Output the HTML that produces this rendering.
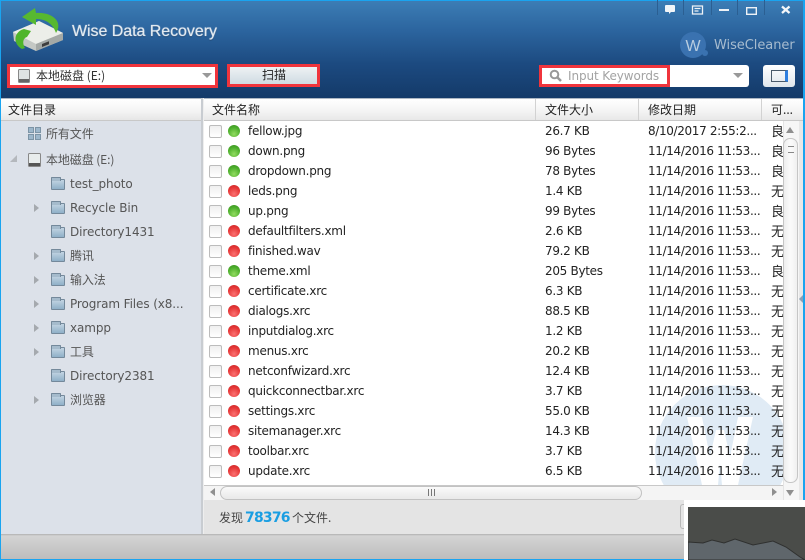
<!DOCTYPE html>
<html><head><meta charset="utf-8">
<style>
*{box-sizing:border-box;margin:0;padding:0}
html,body{width:805px;height:560px;overflow:hidden;background:#fff}
body{position:relative;font-family:"DejaVu Sans","Noto Sans CJK SC",sans-serif;font-size:12px;color:#222}
.a{position:absolute;white-space:nowrap}
#top{left:0;top:0;width:805px;height:98px;background:linear-gradient(#3c7db5 0,#2c659f 30%,#1c4a80 65%,#143a69 100%);border-top:1px solid #19a4f0}
#side{left:1px;top:121px;width:200px;height:413px;background:#dce1e9}
.hd{top:98px;height:23px;background:linear-gradient(#fff,#f3f3f3 60%,#e8e8e8);border-bottom:1px solid #c8c8c8;border-top:1px solid #aeb8c4}
.c{font-family:"Noto Sans CJK SC","DejaVu Sans",sans-serif}
.r{left:248px;width:530px;height:20px;line-height:20px}
.r span{position:absolute;top:0;white-space:nowrap}
.r .n{left:0;letter-spacing:-.25px}
.r .s{left:297px;letter-spacing:-.3px}
.r .d{left:400px;letter-spacing:-.35px}
.r .k{left:523px;font-family:"Noto Sans CJK SC",sans-serif;font-size:13px}
.cb{left:209px;width:13px;height:13px;border:1px solid #bcbcbc;border-radius:2px;background:linear-gradient(#efefef,#fff)}
.g,.x{left:228px;width:12px;height:12px;margin-top:1px;border-radius:50%}
.g{background:radial-gradient(circle at 50% 75%,#92dc60,#4cae2c 60%,#3a8c22)}
.x{background:radial-gradient(circle at 50% 75%,#fb7070,#e53636 60%,#c62828)}
.t{color:#555;height:18px;line-height:18px;font-size:12px;letter-spacing:-.1px}
.f{width:14px;height:11px;margin-top:1px;background:linear-gradient(#c2d4e2,#8fb0c8);border:1px solid #74899b;border-radius:1px}
.f::before{content:"";position:absolute;left:-1px;top:-3px;width:8px;height:3px;background:#a5bbcc;border:1px solid #74899b;border-bottom:0;border-radius:1px 1px 0 0}
.ar{width:0;height:0;border-left:5px solid #a5a9ae;border-top:4px solid transparent;border-bottom:4px solid transparent}
</style></head><body>
<div class="a" id="top"></div>

<svg class="a" style="left:10px;top:8px" width="58" height="46" viewBox="0 0 58 46">
<path d="M3 24 L29 13 L53 25 L53 32 L26 43 L4 33Z" fill="#c4c8c4"/>
<path d="M3 24 L29 13 L53 25 L26 36Z" fill="#eceee9"/>
<path d="M26 36 L53 25 L53 32 L26 43Z" fill="#a4a9a6"/>
<path d="M32 36l7-2.800v3l-7 2.800z" fill="#3d3d3d"/>
<path d="M12 41C3 36 3 24 14 21L21 23L17 29C13 30 12 35 15 40Z" fill="#4fb52b"/>
<path d="M25 0 L12 9 L26 17 L26 11 C36 11 43 16 46 25 C53 15 44 4 26 5Z" fill="#57b830"/>
</svg>
<div class="a" style="left:72px;top:23px;font:16px 'Liberation Sans',sans-serif;color:#e2eaf1;text-shadow:0 0 1px #e2eaf1,0 1px 1px #1a3e68;letter-spacing:-.05px">Wise Data Recovery</div>

<div class="a" style="left:7px;top:64px;width:211px;height:24px;background:#fff;border:3px solid #f0343c"></div>
<svg class="a" style="left:18px;top:69px" width="12" height="14"><rect x=".5" y=".5" width="11" height="13" rx="1" fill="#dfe3e3" stroke="#888"/><rect x="1" y="10" width="10" height="3" fill="#666"/></svg>
<div class="a c" style="left:36px;top:67px;line-height:18px;font-size:12px;color:#333">本地磁盘 (E:)</div>
<div class="a" style="left:202px;top:73px;border-top:5px solid #999;border-left:5px solid transparent;border-right:5px solid transparent"></div>

<div class="a" style="left:227px;top:64px;width:93px;height:23px;background:linear-gradient(#eef2f4,#cfdbe2);border:3px solid #f0343c"></div>
<div class="a c" style="left:262px;top:66px;line-height:18px;font-size:12px;color:#222">扫描</div>

<div class="a" style="left:540px;top:65px;width:209px;height:22px;background:#fff;border-radius:3px"></div>
<div class="a" style="left:539px;top:65px;width:131px;height:22px;border:3px solid #f0343c"></div>
<svg class="a" style="left:549px;top:69px" width="14" height="14"><circle cx="5.500" cy="5.500" r="3.800" fill="none" stroke="#999" stroke-width="2"/><path d="M8 8l4 4" stroke="#999" stroke-width="2.500"/></svg>
<div class="a" style="left:568px;top:67px;line-height:18px;color:#a3a3a3;font-size:12px;letter-spacing:-.1px">Input Keywords</div>
<div class="a" style="left:733px;top:73px;border-top:5px solid #999;border-left:5px solid transparent;border-right:5px solid transparent"></div>

<div class="a" style="left:763px;top:65px;width:32px;height:22px;background:linear-gradient(#fff,#dfe6ec);border-radius:3px"></div>
<div class="a" style="left:771px;top:70px;width:17px;height:12px;border:1px solid #4a5a6a;border-right:3px solid #2f7fe0"></div>

<!-- window buttons -->
<div class="a" style="left:657px;top:0;width:1px;height:15px;background:#2b5f92"></div>
<div class="a" style="left:683px;top:0;width:1px;height:15px;background:#2b5f92"></div>
<div class="a" style="left:711px;top:0;width:1px;height:15px;background:#2b5f92"></div>
<div class="a" style="left:737px;top:0;width:1px;height:15px;background:#2b5f92"></div>
<div class="a" style="left:764px;top:0;width:1px;height:15px;background:#2b5f92"></div>
<svg class="a" style="left:660px;top:0" width="140" height="18">
<path d="M6 5h8a1 1 0 0 1 1 1v5a1 1 0 0 1-1 1h-3l-2 2v-2h-3a1 1 0 0 1-1-1v-5a1 1 0 0 1 1-1z" fill="#f2f5f8"/>
<path d="M32.500 6h10v8h-10zM34.500 8.500h6M34.500 11h4" fill="none" stroke="#eef2f6" stroke-width="1.300"/>
<rect x="59" y="9" width="10" height="2" fill="#eef2f6"/>
<rect x="86.700" y="7.700" width="9.600" height="6.600" fill="none" stroke="#eef2f6" stroke-width="1.400"/>
<path d="M122 6.500l7.500 6.500M129.500 6.500l-7.500 6.500" stroke="#f5f7f9" stroke-width="2.300"/>
</svg>

<!-- WiseCleaner -->
<svg class="a" style="left:679px;top:32px" width="32" height="28"><circle cx="14" cy="13" r="13" fill="#3a72b0"/><circle cx="26" cy="21" r="3" fill="#3a72b0"/><text x="14" y="19" text-anchor="middle" font-family="Liberation Sans" font-size="16" fill="#b8cde0">W</text></svg>
<div class="a" style="left:714px;top:37px;font-size:13px;line-height:17px;color:#a7bccf;letter-spacing:-.05px">WiseCleaner</div>

<!-- side -->
<div class="a" style="left:0;top:98px;width:202px;height:23px;background:linear-gradient(#fff,#f3f3f3 60%,#e6e6e6);border-top:1px solid #aeb8c4;border-bottom:1px solid #c8c8c8"></div>
<div class="a c" style="left:8px;top:101px;line-height:18px;font-size:12px;color:#222">文件目录</div>
<div class="a" id="side"></div>
<div class="a" style="left:201px;top:98px;width:3px;height:436px;background:#c8ccd1;border-right:1px solid #eee"></div>

<svg class="a" style="left:28px;top:127px" width="13" height="13"><rect x=".5" y=".5" width="5" height="5" fill="#9db7cb" stroke="#7c94a6"/><rect x="7.500" y=".5" width="5" height="5" fill="#9db7cb" stroke="#7c94a6"/><rect x=".5" y="7.500" width="5" height="5" fill="#9db7cb" stroke="#7c94a6"/><rect x="7.500" y="7.500" width="5" height="5" fill="#9db7cb" stroke="#7c94a6"/></svg>
<div class="a c t" style="left:46px;top:125px">所有文件</div>
<div class="a" style="left:10px;top:155px;border-bottom:7px solid #b4b8bd;border-left:7px solid transparent"></div>
<svg class="a" style="left:28px;top:153px" width="13" height="14"><rect x=".5" y=".5" width="12" height="13" rx="1" fill="#e8ecec" stroke="#888"/><rect x="1" y="10" width="11" height="3" fill="#555"/></svg>
<div class="a c t" style="left:46px;top:151px">本地磁盘 (E:)</div>

<div class="f a" style="left:51px;top:178px"></div><div class="a t" style="left:70px;top:175px">test_photo</div>
<div class="ar a" style="left:34px;top:204px"></div><div class="f a" style="left:51px;top:202px"></div><div class="a t" style="left:70px;top:199px">Recycle Bin</div>
<div class="f a" style="left:51px;top:226px"></div><div class="a t" style="left:70px;top:223px">Directory1431</div>
<div class="ar a" style="left:34px;top:252px"></div><div class="f a" style="left:51px;top:250px"></div><div class="a c t" style="left:70px;top:247px">腾讯</div>
<div class="ar a" style="left:34px;top:276px"></div><div class="f a" style="left:51px;top:274px"></div><div class="a c t" style="left:70px;top:271px">输入法</div>
<div class="ar a" style="left:34px;top:300px"></div><div class="f a" style="left:51px;top:298px"></div><div class="a t" style="left:70px;top:295px">Program Files (x8...</div>
<div class="ar a" style="left:34px;top:324px"></div><div class="f a" style="left:51px;top:322px"></div><div class="a t" style="left:70px;top:319px">xampp</div>
<div class="ar a" style="left:34px;top:348px"></div><div class="f a" style="left:51px;top:346px"></div><div class="a c t" style="left:70px;top:343px">工具</div>
<div class="f a" style="left:51px;top:370px"></div><div class="a t" style="left:70px;top:367px">Directory2381</div>
<div class="ar a" style="left:34px;top:396px"></div><div class="f a" style="left:51px;top:394px"></div><div class="a c t" style="left:70px;top:391px">浏览器</div>

<!-- header -->
<div class="a hd" style="left:204px;width:601px"></div>
<div class="a" style="left:535px;top:99px;width:1px;height:21px;background:#d2d2d2"></div>
<div class="a" style="left:638px;top:99px;width:1px;height:21px;background:#d2d2d2"></div>
<div class="a" style="left:761px;top:99px;width:1px;height:21px;background:#d2d2d2"></div>
<div class="a c" style="left:212px;top:101px;line-height:18px">文件名称</div>
<div class="a c" style="left:545px;top:101px;line-height:18px">文件大小</div>
<div class="a c" style="left:648px;top:101px;line-height:18px">修改日期</div>
<div class="a c" style="left:771px;top:101px;line-height:18px">可...</div>

<!-- watermark -->
<svg class="a" style="left:650px;top:385px" width="133" height="100"><circle cx="72" cy="67" r="67" fill="#e0ebf5"/><path d="M37 32H52L60 72L66 45H74L80 72L88 32H103L88 100H72L70 78L68 100H52Z" fill="#fff"/></svg>

<!-- rows -->
<div class="a cb" style="top:125px"></div><div class="a g" style="top:124px"></div><div class="a r" style="top:121px"><span class="n">fellow.jpg</span><span class="s">26.7 KB</span><span class="d">8/10/2017 2:55:2...</span><span class="k">良</span></div>
<div class="a cb" style="top:145px"></div><div class="a g" style="top:144px"></div><div class="a r" style="top:141px"><span class="n">down.png</span><span class="s">96 Bytes</span><span class="d">11/14/2016 11:53...</span><span class="k">良</span></div>
<div class="a cb" style="top:165px"></div><div class="a g" style="top:164px"></div><div class="a r" style="top:161px"><span class="n">dropdown.png</span><span class="s">78 Bytes</span><span class="d">11/14/2016 11:53...</span><span class="k">良</span></div>
<div class="a cb" style="top:185px"></div><div class="a x" style="top:184px"></div><div class="a r" style="top:181px"><span class="n">leds.png</span><span class="s">1.4 KB</span><span class="d">11/14/2016 11:53...</span><span class="k">无</span></div>
<div class="a cb" style="top:205px"></div><div class="a g" style="top:204px"></div><div class="a r" style="top:201px"><span class="n">up.png</span><span class="s">99 Bytes</span><span class="d">11/14/2016 11:53...</span><span class="k">良</span></div>
<div class="a cb" style="top:225px"></div><div class="a x" style="top:224px"></div><div class="a r" style="top:221px"><span class="n">defaultfilters.xml</span><span class="s">2.6 KB</span><span class="d">11/14/2016 11:53...</span><span class="k">无</span></div>
<div class="a cb" style="top:245px"></div><div class="a x" style="top:244px"></div><div class="a r" style="top:241px"><span class="n">finished.wav</span><span class="s">79.2 KB</span><span class="d">11/14/2016 11:53...</span><span class="k">无</span></div>
<div class="a cb" style="top:265px"></div><div class="a g" style="top:264px"></div><div class="a r" style="top:261px"><span class="n">theme.xml</span><span class="s">205 Bytes</span><span class="d">11/14/2016 11:53...</span><span class="k">良</span></div>
<div class="a cb" style="top:285px"></div><div class="a x" style="top:284px"></div><div class="a r" style="top:281px"><span class="n">certificate.xrc</span><span class="s">6.3 KB</span><span class="d">11/14/2016 11:53...</span><span class="k">无</span></div>
<div class="a cb" style="top:305px"></div><div class="a x" style="top:304px"></div><div class="a r" style="top:301px"><span class="n">dialogs.xrc</span><span class="s">88.5 KB</span><span class="d">11/14/2016 11:53...</span><span class="k">无</span></div>
<div class="a cb" style="top:325px"></div><div class="a x" style="top:324px"></div><div class="a r" style="top:321px"><span class="n">inputdialog.xrc</span><span class="s">1.2 KB</span><span class="d">11/14/2016 11:53...</span><span class="k">无</span></div>
<div class="a cb" style="top:345px"></div><div class="a x" style="top:344px"></div><div class="a r" style="top:341px"><span class="n">menus.xrc</span><span class="s">20.2 KB</span><span class="d">11/14/2016 11:53...</span><span class="k">无</span></div>
<div class="a cb" style="top:365px"></div><div class="a x" style="top:364px"></div><div class="a r" style="top:361px"><span class="n">netconfwizard.xrc</span><span class="s">12.4 KB</span><span class="d">11/14/2016 11:53...</span><span class="k">无</span></div>
<div class="a cb" style="top:385px"></div><div class="a x" style="top:384px"></div><div class="a r" style="top:381px"><span class="n">quickconnectbar.xrc</span><span class="s">3.7 KB</span><span class="d">11/14/2016 11:53...</span><span class="k">无</span></div>
<div class="a cb" style="top:405px"></div><div class="a x" style="top:404px"></div><div class="a r" style="top:401px"><span class="n">settings.xrc</span><span class="s">55.0 KB</span><span class="d">11/14/2016 11:53...</span><span class="k">无</span></div>
<div class="a cb" style="top:425px"></div><div class="a x" style="top:424px"></div><div class="a r" style="top:421px"><span class="n">sitemanager.xrc</span><span class="s">14.3 KB</span><span class="d">11/14/2016 11:53...</span><span class="k">无</span></div>
<div class="a cb" style="top:445px"></div><div class="a x" style="top:444px"></div><div class="a r" style="top:441px"><span class="n">toolbar.xrc</span><span class="s">3.7 KB</span><span class="d">11/14/2016 11:53...</span><span class="k">无</span></div>
<div class="a cb" style="top:465px"></div><div class="a x" style="top:464px"></div><div class="a r" style="top:461px"><span class="n">update.xrc</span><span class="s">6.5 KB</span><span class="d">11/14/2016 11:53...</span><span class="k">无</span></div>

<!-- v scroll -->
<div class="a" style="left:783px;top:121px;width:16px;height:379px;background:#f6f6f6;border-left:1px solid #e4e4e4"></div>
<div class="a" style="left:786px;top:127px;border-bottom:6px solid #8f8f8f;border-left:4px solid transparent;border-right:4px solid transparent"></div>
<div class="a" style="left:783px;top:138px;width:15px;height:345px;background:linear-gradient(90deg,#eee,#fbfbfb 50%,#f0f0f0);border:1px solid #c6c6c6;border-radius:7px"></div>
<div class="a" style="left:788px;top:146px;width:6px;height:7px;border-top:1px solid #888;border-bottom:1px solid #888"></div>
<div class="a" style="left:786px;top:490px;border-top:6px solid #8f8f8f;border-left:4px solid transparent;border-right:4px solid transparent"></div>

<!-- h scroll -->
<div class="a" style="left:204px;top:485px;width:579px;height:15px;background:#f4f4f4;border-top:1px solid #c8c8c8"></div>
<div class="a" style="left:210px;top:488px;border-right:5px solid #8f8f8f;border-top:4px solid transparent;border-bottom:4px solid transparent"></div>
<div class="a" style="left:220px;top:486px;width:422px;height:14px;background:linear-gradient(#fafafa,#e9e9e9);border:1px solid #c2c2c2;border-radius:7px"></div>
<div class="a" style="left:428px;top:489px;width:7px;height:7px;border-left:1px solid #777;border-right:1px solid #777"></div>
<div class="a" style="left:431px;top:489px;width:1px;height:7px;background:#777"></div>
<div class="a" style="left:772px;top:488px;border-left:5px solid #8f8f8f;border-top:4px solid transparent;border-bottom:4px solid transparent"></div>

<!-- status -->
<div class="a" style="left:204px;top:500px;width:601px;height:34px;background:#e4e4e4"></div>
<div class="a c" style="left:219px;top:509px;line-height:18px;color:#444;font-size:12px">发现</div>
<div class="a" style="left:245px;top:509px;line-height:18px;color:#1a9ee2;font-size:14px;font-weight:bold;letter-spacing:-.8px">78376</div>
<div class="a c" style="left:292px;top:509px;line-height:18px;color:#444;font-size:12px">个文件.</div>

<!-- right arrow and edges -->
<div class="a" style="left:799px;top:121px;width:4px;height:413px;background:#e8e8e8"></div>
<div class="a" style="left:799px;top:295px;border-right:4px solid #8ba0b5;border-top:4px solid transparent;border-bottom:4px solid transparent"></div>

<!-- bottom -->
<div class="a" style="left:0;top:534px;width:805px;height:26px;background:linear-gradient(#b0b0b0 0,#d4d4d4 8%,#bdbdbd 100%);border-bottom:1px solid #19a4f0"></div>
<div class="a" style="left:0;top:0;width:1px;height:560px;background:#19a4f0"></div>
<div class="a" style="left:803px;top:0;width:2px;height:500px;background:#19a4f0"></div>

<!-- overlay -->
<div class="a" style="left:680px;top:504px;width:6px;height:25px;background:#e4e4e4;border:1px solid #b8b8b8;border-right:0;border-radius:3px 0 0 3px"></div>
<div class="a" style="left:684px;top:500px;width:121px;height:60px;background:#fff"></div>
<svg class="a" style="left:688px;top:507px" width="117" height="53" viewBox="0 0 117 53"><rect width="117" height="53" fill="#4a4c49"/><path d="M0 35L15 36L24 33L36 36L47 32L65 38L85 34L98 40L112 50L117 53L0 53Z" fill="#5f666b" stroke="#2f302f" stroke-width="1"/></svg>
</body></html>
